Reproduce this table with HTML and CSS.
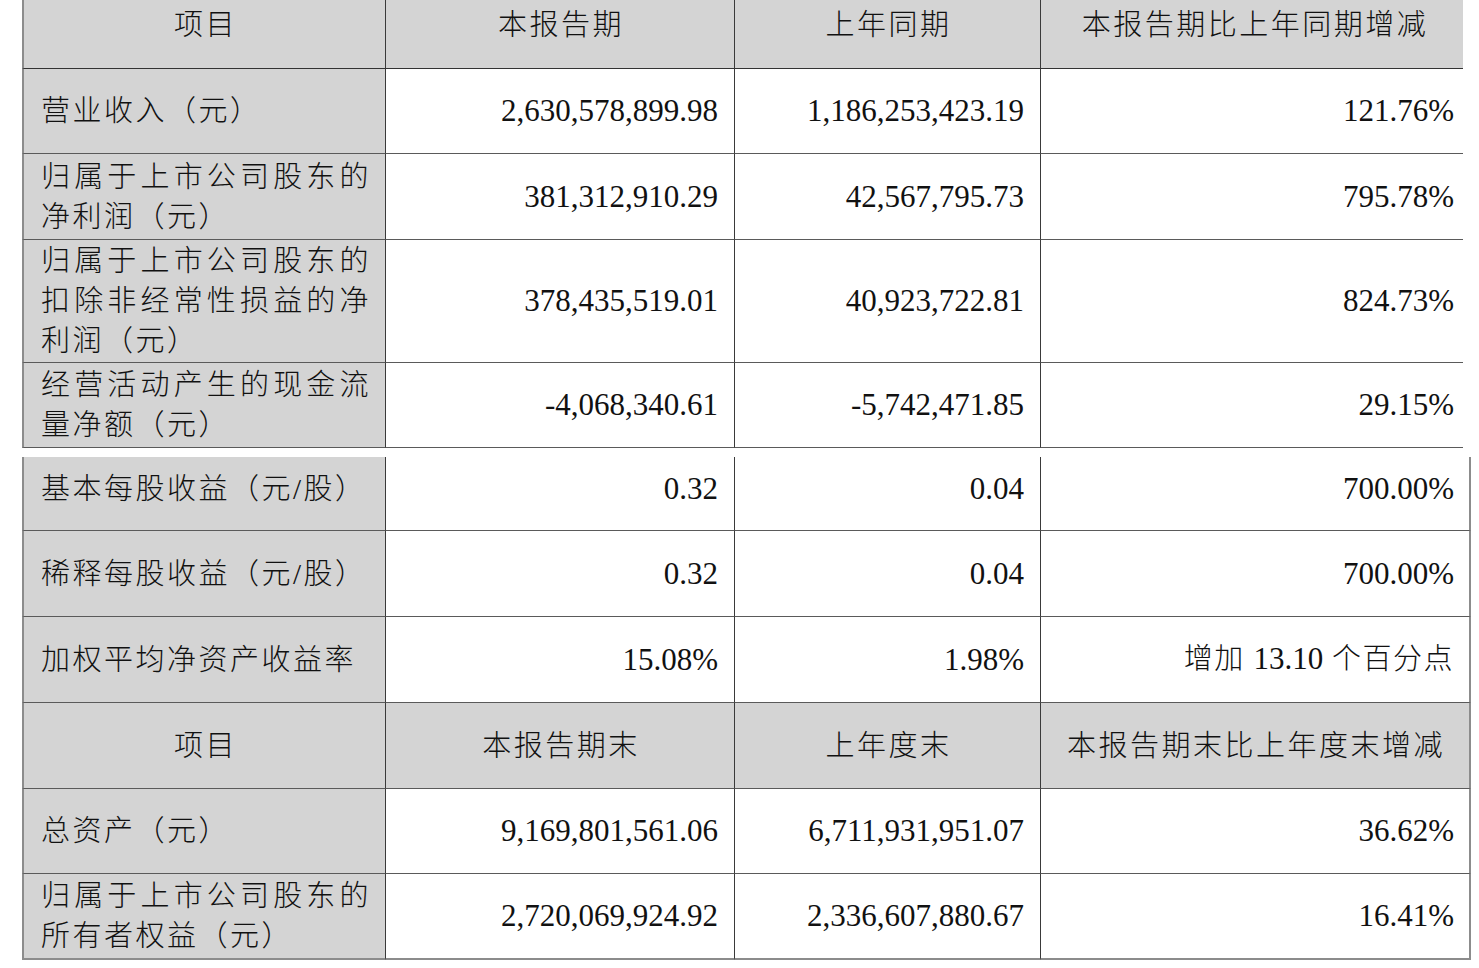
FILE: index.html
```html
<!DOCTYPE html>
<html lang="zh-CN">
<head>
<meta charset="utf-8">
<title>主要会计数据和财务指标</title>
<link rel="stylesheet" href="styles.css">
</head>
<body>
<div class="page">
  <div class="block block-top">
    <div class="row row-head">
      <div class="cell c1 grey center cn">项目</div>
      <div class="cell c2 grey center cn">本报告期</div>
      <div class="cell c3 grey center cn">上年同期</div>
      <div class="cell c4 grey center cn">本报告期比上年同期增减</div>
    </div>
    <div class="row h85">
      <div class="cell c1 grey cn">营业收入（元）</div>
      <div class="cell c2 num">2,630,578,899.98</div>
      <div class="cell c3 num">1,186,253,423.19</div>
      <div class="cell c4 num">121.76%</div>
    </div>
    <div class="row h86">
      <div class="cell c1 grey cn wrap">归属于上市公司股东的净利润（元）</div>
      <div class="cell c2 num">381,312,910.29</div>
      <div class="cell c3 num">42,567,795.73</div>
      <div class="cell c4 num">795.78%</div>
    </div>
    <div class="row h123">
      <div class="cell c1 grey cn wrap">归属于上市公司股东的扣除非经常性损益的净利润（元）</div>
      <div class="cell c2 num">378,435,519.01</div>
      <div class="cell c3 num">40,923,722.81</div>
      <div class="cell c4 num">824.73%</div>
    </div>
    <div class="row h85">
      <div class="cell c1 grey cn wrap">经营活动产生的现金流量净额（元）</div>
      <div class="cell c2 num">-4,068,340.61</div>
      <div class="cell c3 num">-5,742,471.85</div>
      <div class="cell c4 num">29.15%</div>
    </div>
  </div>

  <div class="block block-bottom">
    <div class="row row-cont">
      <div class="cell c1 grey cn">基本每股收益（元/股）</div>
      <div class="cell c2 num">0.32</div>
      <div class="cell c3 num">0.04</div>
      <div class="cell c4 num">700.00%</div>
    </div>
    <div class="row h86">
      <div class="cell c1 grey cn">稀释每股收益（元/股）</div>
      <div class="cell c2 num">0.32</div>
      <div class="cell c3 num">0.04</div>
      <div class="cell c4 num">700.00%</div>
    </div>
    <div class="row h86">
      <div class="cell c1 grey cn">加权平均净资产收益率</div>
      <div class="cell c2 num">15.08%</div>
      <div class="cell c3 num">1.98%</div>
      <div class="cell c4 num mixed">增加 <span class="n">13.10</span> 个百分点</div>
    </div>
    <div class="row h86">
      <div class="cell c1 grey center cn">项目</div>
      <div class="cell c2 grey center cn">本报告期末</div>
      <div class="cell c3 grey center cn">上年度末</div>
      <div class="cell c4 grey center cn">本报告期末比上年度末增减</div>
    </div>
    <div class="row h85">
      <div class="cell c1 grey cn">总资产（元）</div>
      <div class="cell c2 num">9,169,801,561.06</div>
      <div class="cell c3 num">6,711,931,951.07</div>
      <div class="cell c4 num">36.62%</div>
    </div>
    <div class="row h86 last">
      <div class="cell c1 grey cn wrap">归属于上市公司股东的所有者权益（元）</div>
      <div class="cell c2 num">2,720,069,924.92</div>
      <div class="cell c3 num">2,336,607,880.67</div>
      <div class="cell c4 num">16.41%</div>
    </div>
  </div>
</div>
</body>
</html>
```

FILE: styles.css
```css
* {
  box-sizing: border-box;
}

html, body {
  margin: 0;
  padding: 0;
  background: #ffffff;
}

body {
  font-family: "Liberation Serif", "Noto Sans CJK SC", serif;
  font-size: 29px;
  color: #111111;
}

.page {
  padding-left: 22px;
  width: 1479px;
  height: 968px;
  overflow: hidden;
}

.block {
  display: flex;
  flex-direction: column;
}

.block-bottom {
  margin-top: 9px;
}

.row {
  display: grid;
  grid-template-columns: 364px 349px 306px 422px;
}

.block-bottom .row {
  grid-template-columns: 364px 349px 306px 430px;
}

.cell {
  display: flex;
  align-items: center;
  border-bottom: 1px solid #5a5a5a;
  border-right: 1px solid #3a3a3a;
  line-height: 40px;
  min-width: 0;
}

.c1 {
  border-left: 2px solid #8c8c8c;
  padding-left: 17px;
  padding-right: 14px;
}

.block-top .c4 {
  border-right: none;
  padding-right: 9px;
}

.block-bottom .c4 {
  border-right: 2px solid #8c8c8c;
  padding-right: 15px;
}

.grey {
  background: #d4d4d4;
}

.cn {
  font-weight: 300;
  letter-spacing: 2.5px;
}

.cell.center {
  justify-content: center;
  text-align: center;
  padding-left: 2px;
  padding-right: 0;
}

.block-top .c4.center {
  padding-left: 6px;
}

.num {
  justify-content: flex-end;
  text-align: right;
  padding-right: 16px;
  font-size: 31px;
}

.mixed {
  display: block;
  padding-top: 22px;
  font-size: 29px;
  font-weight: 300;
  letter-spacing: 1.5px;
}

.mixed .n {
  font-size: 31px;
  font-weight: 400;
  letter-spacing: 0;
}

.wrap {
  text-align: justify;
  text-justify: inter-character;
}

.row-head {
  height: 69px;
}

.row-head .cell {
  padding-bottom: 18px;
  border-bottom-color: #333333;
}

.row-cont {
  height: 74px;
}

.row-cont .cell {
  padding-bottom: 9px;
}

.h85 {
  height: 85px;
}

.h86 {
  height: 86px;
}

.h123 {
  height: 123px;
}

.last .cell {
  border-bottom: 2px solid #8c8c8c;
}
```
